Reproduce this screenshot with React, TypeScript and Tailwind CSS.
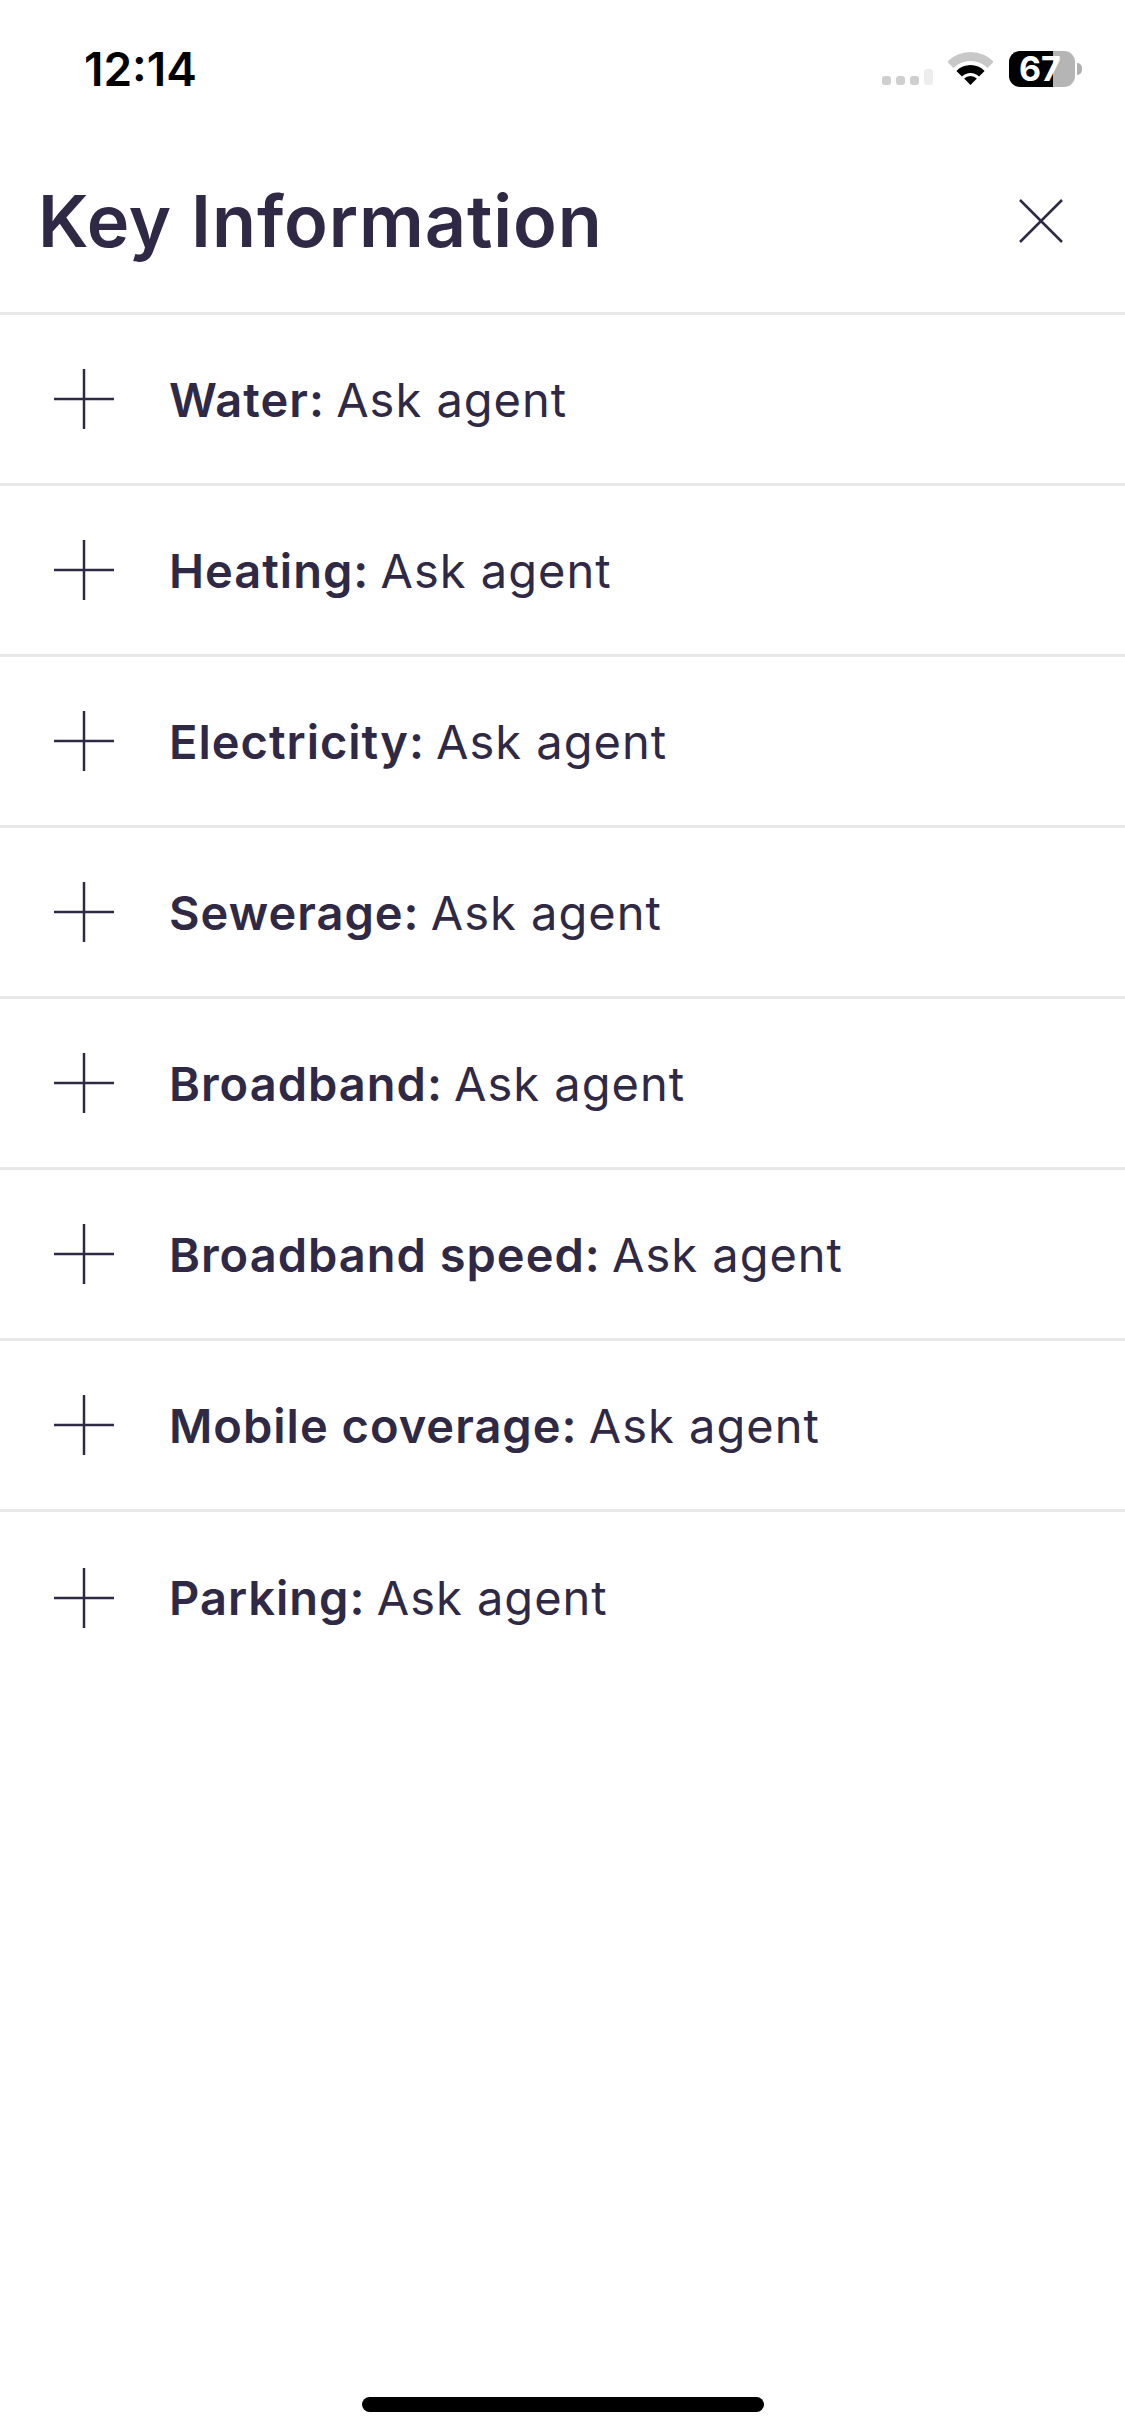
const rows = [
  'Water',
  'Heating',
  'Electricity',
  'Sewerage',
  'Broadband',
  'Broadband speed',
  'Mobile coverage',
  'Parking',
];

function StatusBar() {
  return (
    <div className="h-[100px] flex items-start justify-between pt-[46px] pl-[84px] pr-[43px]">
      <span className="font-['Inter',sans-serif] text-[46px] leading-[46px] font-semibold text-black">12:14</span>
      <div className="flex items-end h-[36px] mt-[5px]">
        {/* signal */}
        <div className="flex items-end gap-[5px] mb-[2px]">
          <div className="w-[9px] h-[9px] rounded-[3px] bg-[#cfcfcf]" />
          <div className="w-[9px] h-[9px] rounded-[3px] bg-[#cfcfcf]" />
          <div className="w-[9px] h-[9px] rounded-[3px] bg-[#cfcfcf]" />
          <div className="w-[9px] h-[16px] rounded-[3px] bg-[#ededed]" />
        </div>
        <svg className="ml-[15px] mb-[1px]" width="45" height="34" viewBox="0 0 45 34">
          <path d="M-0.8 9.7A33 33 0 0 1 45.8 9.7L39.5 16A24 24 0 0 0 5.5 16Z" fill="#c8c8c8" />
          <path d="M8.4 18.9A20 20 0 0 1 36.6 18.9L31 24.5A12 12 0 0 0 14 24.5Z" fill="#000" />
          <path d="M16.1 26.6A9 9 0 0 1 28.9 26.6L22.5 33Z" fill="#000" />
        </svg>
        {/* battery */}
        <div className="relative ml-[16px] w-[66px] h-[36px] flex">
          <div className="w-[44px] rounded-l-[11px] bg-black" />
          <div className="flex-1 rounded-r-[11px] bg-[#b5b5b5]" />
          <span className="absolute inset-0 pl-[10px] flex items-center font-['Inter',sans-serif] text-[34px] leading-none font-bold text-white">67</span>
        </div>
        <div className="ml-[2px] self-center w-[5px] h-[12px] rounded-r-full bg-[#b0b0b0]" />
      </div>
    </div>
  );
}

export default function App() {
  return (
    <div className="w-[1125px] h-[2436px] bg-white flex flex-col font-['Inter',sans-serif] text-[#2f2945]">
      <StatusBar />
      <div className="h-[215px] flex items-center justify-between pl-[38px] pr-[62px] pt-[30px] border-b-[3px] border-[#e8e8e8]">
        <h1 className="text-[72px] leading-none font-semibold tracking-[0.9px]">Key Information</h1>
        <svg width="44" height="44" viewBox="0 0 44 44" fill="none" stroke="#2f2945" strokeWidth="2.5">
          <path d="M1 1L43 43M43 1L1 43" />
        </svg>
      </div>
      {rows.map((name, i) => (
        <div
          key={name}
          className={`h-[171px] flex items-center gap-[55px] pl-[54px] ${i < rows.length - 1 ? 'border-b-[3px] border-[#e8e8e8]' : ''}`}
        >
          <svg className="shrink-0" width="60" height="60" viewBox="0 0 60 60" fill="none" stroke="#2f2945" strokeWidth="2.5">
            <path d="M30 0V60M0 30H60" />
          </svg>
          <p className="text-[47px] leading-none tracking-[1px]">
            <span className="font-semibold">{name}:</span> <span className="-ml-[3px]">Ask agent</span>
          </p>
        </div>
      ))}
      <div className="mt-auto mb-[24px] mx-auto w-[402px] h-[15px] rounded-full bg-black" />
    </div>
  );
}
